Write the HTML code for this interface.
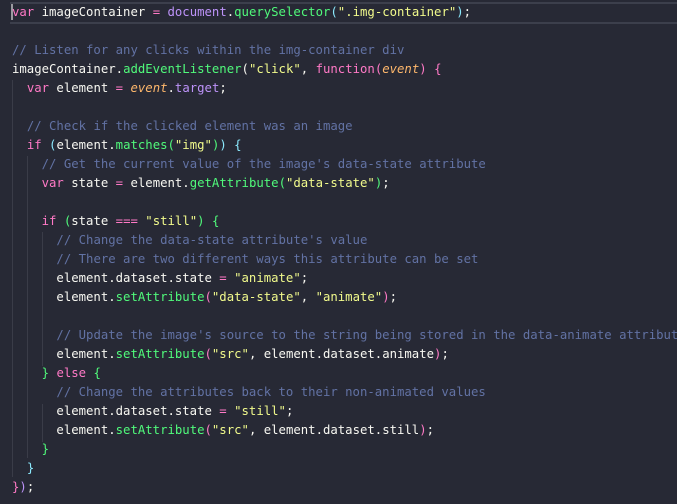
<!DOCTYPE html>
<html><head><meta charset="utf-8"><style>
html,body{margin:0;padding:0;background:#272935;width:677px;height:504px;overflow:hidden}
pre{margin:0;position:absolute;left:12px;top:3px;font-family:"DejaVu Sans Mono","Liberation Mono",monospace;font-size:12.3px;line-height:19px;color:#f8f8f2;white-space:pre}
.hl{position:absolute;left:10px;right:0;top:2px;height:18px;border-top:2px solid #3c3f4c;border-bottom:2px solid #3c3f4c}
.cur{position:absolute;left:11px;top:4px;width:2px;height:16px;background:#9a9aa0}
.g{position:absolute;width:1px;background:#3a3c48}
.k{color:#ff79c6}.f{color:#50fa7b}.s{color:#f1fa8c}.c{color:#6272a4}.p{color:#bd93f9}.e{color:#ffb86c;font-style:italic}
.b1{color:#ff79c6}.b2{color:#8be9fd}.b3{color:#50fa7b}
</style></head><body>
<div class="hl"></div><div class="cur"></div>
<div class="g" style="left:12px;top:80px;height:397px"></div>
<div class="g" style="left:27px;top:156px;height:302px"></div>
<div class="g" style="left:42px;top:232px;height:134px"></div>
<div class="g" style="left:42px;top:404px;height:38px"></div>
<pre><span class="k">var</span> imageContainer <span class="k">=</span> <span class="p">document</span>.<span class="f">querySelector</span><span class="b2">(</span><span class="s">".img-container"</span><span class="b2">)</span>;

<span class="c">// Listen for any clicks within the img-container div</span>
imageContainer.<span class="f">addEventListener</span>(<span class="s">"click"</span>, <span class="k">function</span><span class="b1">(</span><span class="e">event</span><span class="b1">)</span> <span class="b1">{</span>
  <span class="k">var</span> element <span class="k">=</span> <span class="e">event</span>.<span class="p">target</span>;

  <span class="c">// Check if the clicked element was an image</span>
  <span class="k">if</span> <span class="b2">(</span>element.<span class="f">matches</span><span class="b3">(</span><span class="s">"img"</span><span class="b3">)</span><span class="b2">)</span> <span class="b2">{</span>
    <span class="c">// Get the current value of the image's data-state attribute</span>
    <span class="k">var</span> state <span class="k">=</span> element.<span class="f">getAttribute</span><span class="b3">(</span><span class="s">"data-state"</span><span class="b3">)</span>;

    <span class="k">if</span> <span class="b3">(</span>state <span class="k">===</span> <span class="s">"still"</span><span class="b3">)</span> <span class="b3">{</span>
      <span class="c">// Change the data-state attribute's value</span>
      <span class="c">// There are two different ways this attribute can be set</span>
      element.dataset.state <span class="k">=</span> <span class="s">"animate"</span>;
      element.<span class="f">setAttribute</span><span class="b1">(</span><span class="s">"data-state"</span>, <span class="s">"animate"</span><span class="b1">)</span>;

      <span class="c">// Update the image's source to the string being stored in the data-animate attribute</span>
      element.<span class="f">setAttribute</span><span class="b1">(</span><span class="s">"src"</span>, element.dataset.animate<span class="b1">)</span>;
    <span class="b3">}</span> <span class="k">else</span> <span class="b3">{</span>
      <span class="c">// Change the attributes back to their non-animated values</span>
      element.dataset.state <span class="k">=</span> <span class="s">"still"</span>;
      element.<span class="f">setAttribute</span><span class="b1">(</span><span class="s">"src"</span>, element.dataset.still<span class="b1">)</span>;
    <span class="b3">}</span>
  <span class="b2">}</span>
<span class="b1">}</span><span class="p">)</span>;</pre>
</body></html>
